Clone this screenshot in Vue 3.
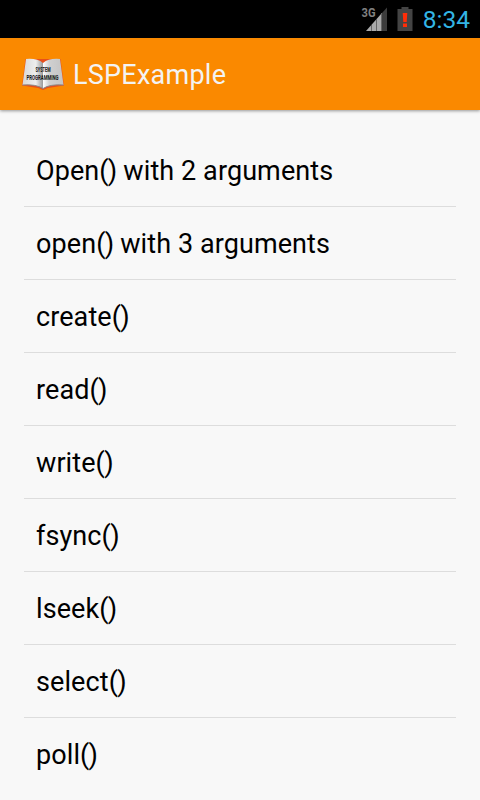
<script setup>
const items = [
  'Open() with 2 arguments',
  'open() with 3 arguments',
  'create()',
  'read()',
  'write()',
  'fsync()',
  'lseek()',
  'select()',
  'poll()',
].map((label) => label.split('()'))
</script>

<template>
  <div class="screen">
    <header class="status-bar">
      <svg class="signal" width="30" height="26" viewBox="0 0 30 26">
        <text class="network" x="1.5" y="11.3" textLength="14" lengthAdjust="spacingAndGlyphs">3G</text>
        <path d="M6 25L21 8V25Z" fill="#aaa" />
        <path d="M22 7L27 1.5V25H22Z" fill="#3c3c3c" />
        <path d="M11.5 19v6M16.5 13v12M21.5 7v18" stroke="#666" />
      </svg>
      <svg class="battery" width="16" height="24" viewBox="0 0 16 24">
        <path d="M4.5 0h7v2H15.5V24H0.5V2H4.5Z" fill="#444" />
        <path d="M5.7 6h4.6L9.7 15H6.3ZM6 16.5h4v3.5H6Z" fill="#ff2d08" />
      </svg>
      <span class="clock">8:34</span>
    </header>
    <div class="action-bar">
      <svg class="book" width="44" height="33" viewBox="0 0 44 33">
        <defs>
          <linearGradient id="left-page">
            <stop offset="0" stop-color="#d8d8d8" />
            <stop offset="0.65" stop-color="#eee" />
            <stop offset="1" stop-color="#999" />
          </linearGradient>
          <linearGradient id="right-page">
            <stop offset="0" stop-color="#fff" />
            <stop offset="0.3" stop-color="#d0d0d0" />
            <stop offset="1" stop-color="#c4c4c4" />
          </linearGradient>
        </defs>
        <path d="M4.5 1L1 27.5 17 30 22 32 27 30 43 27.5 39.5 1Z" fill="#e8501c" />
        <path d="M5 1Q16 0 22 5V30.5Q15 26 1.5 27Z" fill="url(#left-page)" />
        <path d="M22 5Q28 0 39 1L42.5 27Q29 26 22 30.5Z" fill="url(#right-page)" />
        <path d="M1.5 27Q15 26 22 30.5 29 26 42.5 27" fill="none" stroke="#888" />
        <text x="14.5" y="14" textLength="15" lengthAdjust="spacingAndGlyphs">SYSTEM</text>
        <text x="5.5" y="21.5" textLength="32" lengthAdjust="spacingAndGlyphs">PROGRAMMING</text>
      </svg>
      <h1>LSPExample</h1>
    </div>
    <ul class="list">
      <li v-for="[name, rest] in items" :key="name">
        {{ name }}<span class="parens">()</span>{{ rest }}
      </li>
    </ul>
  </div>
</template>

<style>
body {
  background: #f8f8f8;
}
</style>

<style scoped>
.screen {
  height: 800px;
  overflow: hidden;
  font-family: Roboto, sans-serif;
}

.status-bar {
  display: flex;
  justify-content: flex-end;
  height: 38px;
  background: #000;
}

.signal {
  margin: 6px 7px 0 0;
}

.network {
  font-size: 12px;
  font-weight: 700;
  fill: #808080;
}

.battery {
  margin: 7px 10px 0 0;
}

.clock {
  font-size: 24.5px;
  line-height: 39px;
  color: #33b5e5;
  margin-right: 10px;
}

.action-bar {
  display: flex;
  align-items: center;
  height: 72px;
  padding-left: 21px;
  background: #fa8900;
  box-shadow: 0 1px 3px rgba(0, 0, 0, 0.4);
}

.book {
  overflow: visible;
}

.book text {
  font-size: 6.5px;
  font-weight: 700;
  fill: #111;
}

h1 {
  margin: 2px 0 0 8px;
  font-size: 27px;
  font-weight: 400;
  line-height: 72px;
  letter-spacing: 0.25px;
  color: #f3f3f3;
}

.list {
  list-style: none;
  margin: 0;
  padding: 24px;
}

li {
  height: 71px;
  padding: 1px 0 0 12px;
  border-bottom: 1px solid #ddd;
  font-size: 27px;
  line-height: 72px;
  letter-spacing: 0.09px;
}

li:last-child {
  border-bottom: 0;
}

.parens {
  letter-spacing: -0.7px;
}
</style>
